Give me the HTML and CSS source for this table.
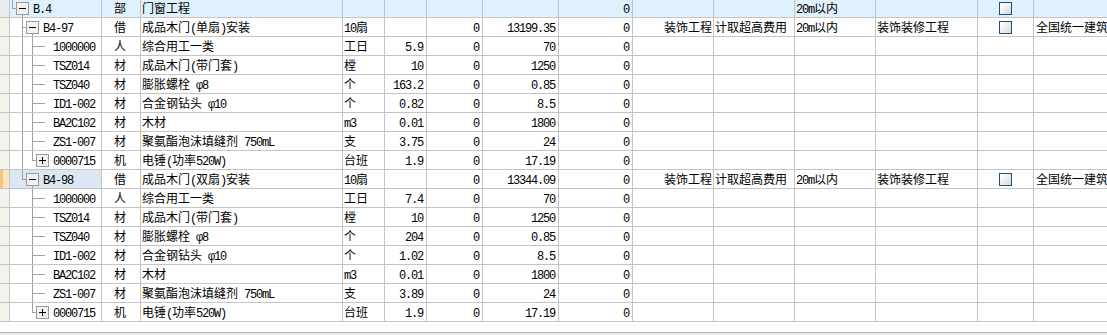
FILE: index.html
```html
<!DOCTYPE html>
<html lang="zh-CN">
<head>
<meta charset="utf-8">
<title>门窗工程</title>
<link rel="stylesheet" href="styles.css">
</head>
<body>
<div class="grid">
  <div class="row hd">
    <div class="c s"></div>
    <div class="c code"><svg class="tr" width="23" height="18"><line x1="2.5" y1="0" x2="2.5" y2="10"/><line x1="2" y1="9.5" x2="6" y2="9.5"/><line x1="12.5" y1="16" x2="12.5" y2="18"/><rect x="6.5" y="3.5" width="12" height="12"/><line class="g" x1="9" y1="9.5" x2="16" y2="9.5"/></svg><span class="m">B.4</span></div>
    <div class="c t">部</div>
    <div class="c n">门窗工程</div>
    <div class="c"></div>
    <div class="c"></div>
    <div class="c"></div>
    <div class="c"></div>
    <div class="c r"><span class="m">0</span></div>
    <div class="c"></div>
    <div class="c"></div>
    <div class="c n"><span class="m">20m</span>以内</div>
    <div class="c"></div>
    <div class="c cbc"><span class="cb"></span></div>
    <div class="c"></div>
  </div>

  <div class="row">
    <div class="c s"></div>
    <div class="c code"><svg class="tr" width="33" height="18"><line x1="12.5" y1="0" x2="12.5" y2="18"/><line x1="12" y1="9.5" x2="16" y2="9.5"/><line x1="22.5" y1="16" x2="22.5" y2="18"/><rect x="16.5" y="3.5" width="12" height="12"/><line class="g" x1="19" y1="9.5" x2="26" y2="9.5"/></svg><span class="m">B4-97</span></div>
    <div class="c t">借</div>
    <div class="c n">成品木门<span class="m">(</span>单扇<span class="m">)</span>安装</div>
    <div class="c n"><span class="m">10</span>扇</div>
    <div class="c"></div>
    <div class="c r"><span class="m">0</span></div>
    <div class="c r"><span class="m">13199.35</span></div>
    <div class="c r"><span class="m">0</span></div>
    <div class="c r2">装饰工程</div>
    <div class="c n">计取超高费用</div>
    <div class="c n"><span class="m">20m</span>以内</div>
    <div class="c n">装饰装修工程</div>
    <div class="c cbc"><span class="cb"></span></div>
    <div class="c n2">全国统一建筑装饰装修工程消耗量定额</div>
  </div>

  <div class="row">
    <div class="c s"></div>
    <div class="c code"><svg class="tr" width="43" height="18"><line x1="12.5" y1="0" x2="12.5" y2="18"/><line x1="22.5" y1="0" x2="22.5" y2="18"/><line x1="22" y1="9.5" x2="35" y2="9.5"/></svg><span class="m">1000000</span></div>
    <div class="c t">人</div>
    <div class="c n">综合用工一类</div>
    <div class="c n">工日</div>
    <div class="c r"><span class="m">5.9</span></div>
    <div class="c r"><span class="m">0</span></div>
    <div class="c r"><span class="m">70</span></div>
    <div class="c r"><span class="m">0</span></div>
    <div class="c"></div><div class="c"></div><div class="c"></div><div class="c"></div><div class="c"></div><div class="c"></div>
  </div>

  <div class="row">
    <div class="c s"></div>
    <div class="c code"><svg class="tr" width="43" height="18"><line x1="12.5" y1="0" x2="12.5" y2="18"/><line x1="22.5" y1="0" x2="22.5" y2="18"/><line x1="22" y1="9.5" x2="35" y2="9.5"/></svg><span class="m">TSZ014</span></div>
    <div class="c t">材</div>
    <div class="c n">成品木门<span class="m">(</span>带门套<span class="m">)</span></div>
    <div class="c n">樘</div>
    <div class="c r"><span class="m">10</span></div>
    <div class="c r"><span class="m">0</span></div>
    <div class="c r"><span class="m">1250</span></div>
    <div class="c r"><span class="m">0</span></div>
    <div class="c"></div><div class="c"></div><div class="c"></div><div class="c"></div><div class="c"></div><div class="c"></div>
  </div>

  <div class="row">
    <div class="c s"></div>
    <div class="c code"><svg class="tr" width="43" height="18"><line x1="12.5" y1="0" x2="12.5" y2="18"/><line x1="22.5" y1="0" x2="22.5" y2="18"/><line x1="22" y1="9.5" x2="35" y2="9.5"/></svg><span class="m">TSZ040</span></div>
    <div class="c t">材</div>
    <div class="c n">膨胀螺栓<span class="m"> φ8</span></div>
    <div class="c n">个</div>
    <div class="c r"><span class="m">163.2</span></div>
    <div class="c r"><span class="m">0</span></div>
    <div class="c r"><span class="m">0.85</span></div>
    <div class="c r"><span class="m">0</span></div>
    <div class="c"></div><div class="c"></div><div class="c"></div><div class="c"></div><div class="c"></div><div class="c"></div>
  </div>

  <div class="row">
    <div class="c s"></div>
    <div class="c code"><svg class="tr" width="43" height="18"><line x1="12.5" y1="0" x2="12.5" y2="18"/><line x1="22.5" y1="0" x2="22.5" y2="18"/><line x1="22" y1="9.5" x2="35" y2="9.5"/></svg><span class="m">ID1-002</span></div>
    <div class="c t">材</div>
    <div class="c n">合金钢钻头<span class="m"> φ10</span></div>
    <div class="c n">个</div>
    <div class="c r"><span class="m">0.82</span></div>
    <div class="c r"><span class="m">0</span></div>
    <div class="c r"><span class="m">8.5</span></div>
    <div class="c r"><span class="m">0</span></div>
    <div class="c"></div><div class="c"></div><div class="c"></div><div class="c"></div><div class="c"></div><div class="c"></div>
  </div>

  <div class="row">
    <div class="c s"></div>
    <div class="c code"><svg class="tr" width="43" height="18"><line x1="12.5" y1="0" x2="12.5" y2="18"/><line x1="22.5" y1="0" x2="22.5" y2="18"/><line x1="22" y1="9.5" x2="35" y2="9.5"/></svg><span class="m">BA2C102</span></div>
    <div class="c t">材</div>
    <div class="c n">木材</div>
    <div class="c n"><span class="m">m3</span></div>
    <div class="c r"><span class="m">0.01</span></div>
    <div class="c r"><span class="m">0</span></div>
    <div class="c r"><span class="m">1800</span></div>
    <div class="c r"><span class="m">0</span></div>
    <div class="c"></div><div class="c"></div><div class="c"></div><div class="c"></div><div class="c"></div><div class="c"></div>
  </div>

  <div class="row">
    <div class="c s"></div>
    <div class="c code"><svg class="tr" width="43" height="18"><line x1="12.5" y1="0" x2="12.5" y2="18"/><line x1="22.5" y1="0" x2="22.5" y2="18"/><line x1="22" y1="9.5" x2="35" y2="9.5"/></svg><span class="m">ZS1-007</span></div>
    <div class="c t">材</div>
    <div class="c n">聚氨酯泡沫填缝剂<span class="m"> 750mL</span></div>
    <div class="c n">支</div>
    <div class="c r"><span class="m">3.75</span></div>
    <div class="c r"><span class="m">0</span></div>
    <div class="c r"><span class="m">24</span></div>
    <div class="c r"><span class="m">0</span></div>
    <div class="c"></div><div class="c"></div><div class="c"></div><div class="c"></div><div class="c"></div><div class="c"></div>
  </div>

  <div class="row">
    <div class="c s"></div>
    <div class="c code"><svg class="tr" width="43" height="18"><line x1="12.5" y1="0" x2="12.5" y2="18"/><line x1="22.5" y1="0" x2="22.5" y2="10"/><line x1="22" y1="9.5" x2="26" y2="9.5"/><rect x="26.5" y="3.5" width="12" height="12"/><line class="g" x1="29" y1="9.5" x2="36" y2="9.5"/><line class="g" x1="32.5" y1="6" x2="32.5" y2="13"/></svg><span class="m">0000715</span></div>
    <div class="c t">机</div>
    <div class="c n">电锤<span class="m">(</span>功率<span class="m">520W)</span></div>
    <div class="c n">台班</div>
    <div class="c r"><span class="m">1.9</span></div>
    <div class="c r"><span class="m">0</span></div>
    <div class="c r"><span class="m">17.19</span></div>
    <div class="c r"><span class="m">0</span></div>
    <div class="c"></div><div class="c"></div><div class="c"></div><div class="c"></div><div class="c"></div><div class="c"></div>
  </div>

  <div class="row sel">
    <div class="c s"></div>
    <div class="c code"><svg class="tr" width="33" height="18"><line x1="12.5" y1="0" x2="12.5" y2="10"/><line x1="12" y1="9.5" x2="16" y2="9.5"/><line x1="22.5" y1="16" x2="22.5" y2="18"/><rect x="16.5" y="3.5" width="12" height="12"/><line class="g" x1="19" y1="9.5" x2="26" y2="9.5"/></svg><span class="m">B4-98</span></div>
    <div class="c t">借</div>
    <div class="c n">成品木门<span class="m">(</span>双扇<span class="m">)</span>安装</div>
    <div class="c n"><span class="m">10</span>扇</div>
    <div class="c"></div>
    <div class="c r"><span class="m">0</span></div>
    <div class="c r"><span class="m">13344.09</span></div>
    <div class="c r"><span class="m">0</span></div>
    <div class="c r2">装饰工程</div>
    <div class="c n">计取超高费用</div>
    <div class="c n"><span class="m">20m</span>以内</div>
    <div class="c n">装饰装修工程</div>
    <div class="c cbc"><span class="cb"></span></div>
    <div class="c n2">全国统一建筑装饰装修工程消耗量定额</div>
  </div>

  <div class="row">
    <div class="c s"></div>
    <div class="c code"><svg class="tr" width="43" height="18"><line x1="22.5" y1="0" x2="22.5" y2="18"/><line x1="22" y1="9.5" x2="35" y2="9.5"/></svg><span class="m">1000000</span></div>
    <div class="c t">人</div>
    <div class="c n">综合用工一类</div>
    <div class="c n">工日</div>
    <div class="c r"><span class="m">7.4</span></div>
    <div class="c r"><span class="m">0</span></div>
    <div class="c r"><span class="m">70</span></div>
    <div class="c r"><span class="m">0</span></div>
    <div class="c"></div><div class="c"></div><div class="c"></div><div class="c"></div><div class="c"></div><div class="c"></div>
  </div>

  <div class="row">
    <div class="c s"></div>
    <div class="c code"><svg class="tr" width="43" height="18"><line x1="22.5" y1="0" x2="22.5" y2="18"/><line x1="22" y1="9.5" x2="35" y2="9.5"/></svg><span class="m">TSZ014</span></div>
    <div class="c t">材</div>
    <div class="c n">成品木门<span class="m">(</span>带门套<span class="m">)</span></div>
    <div class="c n">樘</div>
    <div class="c r"><span class="m">10</span></div>
    <div class="c r"><span class="m">0</span></div>
    <div class="c r"><span class="m">1250</span></div>
    <div class="c r"><span class="m">0</span></div>
    <div class="c"></div><div class="c"></div><div class="c"></div><div class="c"></div><div class="c"></div><div class="c"></div>
  </div>

  <div class="row">
    <div class="c s"></div>
    <div class="c code"><svg class="tr" width="43" height="18"><line x1="22.5" y1="0" x2="22.5" y2="18"/><line x1="22" y1="9.5" x2="35" y2="9.5"/></svg><span class="m">TSZ040</span></div>
    <div class="c t">材</div>
    <div class="c n">膨胀螺栓<span class="m"> φ8</span></div>
    <div class="c n">个</div>
    <div class="c r"><span class="m">204</span></div>
    <div class="c r"><span class="m">0</span></div>
    <div class="c r"><span class="m">0.85</span></div>
    <div class="c r"><span class="m">0</span></div>
    <div class="c"></div><div class="c"></div><div class="c"></div><div class="c"></div><div class="c"></div><div class="c"></div>
  </div>

  <div class="row">
    <div class="c s"></div>
    <div class="c code"><svg class="tr" width="43" height="18"><line x1="22.5" y1="0" x2="22.5" y2="18"/><line x1="22" y1="9.5" x2="35" y2="9.5"/></svg><span class="m">ID1-002</span></div>
    <div class="c t">材</div>
    <div class="c n">合金钢钻头<span class="m"> φ10</span></div>
    <div class="c n">个</div>
    <div class="c r"><span class="m">1.02</span></div>
    <div class="c r"><span class="m">0</span></div>
    <div class="c r"><span class="m">8.5</span></div>
    <div class="c r"><span class="m">0</span></div>
    <div class="c"></div><div class="c"></div><div class="c"></div><div class="c"></div><div class="c"></div><div class="c"></div>
  </div>

  <div class="row">
    <div class="c s"></div>
    <div class="c code"><svg class="tr" width="43" height="18"><line x1="22.5" y1="0" x2="22.5" y2="18"/><line x1="22" y1="9.5" x2="35" y2="9.5"/></svg><span class="m">BA2C102</span></div>
    <div class="c t">材</div>
    <div class="c n">木材</div>
    <div class="c n"><span class="m">m3</span></div>
    <div class="c r"><span class="m">0.01</span></div>
    <div class="c r"><span class="m">0</span></div>
    <div class="c r"><span class="m">1800</span></div>
    <div class="c r"><span class="m">0</span></div>
    <div class="c"></div><div class="c"></div><div class="c"></div><div class="c"></div><div class="c"></div><div class="c"></div>
  </div>

  <div class="row">
    <div class="c s"></div>
    <div class="c code"><svg class="tr" width="43" height="18"><line x1="22.5" y1="0" x2="22.5" y2="18"/><line x1="22" y1="9.5" x2="35" y2="9.5"/></svg><span class="m">ZS1-007</span></div>
    <div class="c t">材</div>
    <div class="c n">聚氨酯泡沫填缝剂<span class="m"> 750mL</span></div>
    <div class="c n">支</div>
    <div class="c r"><span class="m">3.89</span></div>
    <div class="c r"><span class="m">0</span></div>
    <div class="c r"><span class="m">24</span></div>
    <div class="c r"><span class="m">0</span></div>
    <div class="c"></div><div class="c"></div><div class="c"></div><div class="c"></div><div class="c"></div><div class="c"></div>
  </div>

  <div class="row">
    <div class="c s"></div>
    <div class="c code"><svg class="tr" width="43" height="18"><line x1="22.5" y1="0" x2="22.5" y2="10"/><line x1="22" y1="9.5" x2="26" y2="9.5"/><rect x="26.5" y="3.5" width="12" height="12"/><line class="g" x1="29" y1="9.5" x2="36" y2="9.5"/><line class="g" x1="32.5" y1="6" x2="32.5" y2="13"/></svg><span class="m">0000715</span></div>
    <div class="c t">机</div>
    <div class="c n">电锤<span class="m">(</span>功率<span class="m">520W)</span></div>
    <div class="c n">台班</div>
    <div class="c r"><span class="m">1.9</span></div>
    <div class="c r"><span class="m">0</span></div>
    <div class="c r"><span class="m">17.19</span></div>
    <div class="c r"><span class="m">0</span></div>
    <div class="c"></div><div class="c"></div><div class="c"></div><div class="c"></div><div class="c"></div><div class="c"></div>
  </div>
</div>
<div class="spacer"></div>
<div class="status"></div>
</body>
</html>
```

FILE: styles.css
```css
* { box-sizing: border-box; }

html, body {
  margin: 0;
  padding: 0;
  background: #ffffff;
}

body {
  width: 1107px;
  height: 335px;
  overflow: hidden;
  display: flex;
  flex-direction: column;
  font-family: "Noto Sans CJK SC", "Noto Sans", sans-serif;
  font-size: 12px;
  color: #000000;
}

.grid {
  margin-top: -1px;
  width: 1154px;
  flex: none;
}

.row {
  display: grid;
  grid-template-columns: 10px 92px 39px 202px 42px 42px 56px 76px 74px 81px 81px 81px 102px 56px 120px;
  height: 19px;
}

.c {
  height: 19px;
  border-right: 1px solid #c4c4c4;
  border-bottom: 1px solid #c4c4c4;
  line-height: 18px;
  white-space: nowrap;
  overflow: hidden;
  padding: 0 2px 0 1px;
}

.s {
  background: #f3f2ed;
  padding: 0;
}

.hd .c { background: #dff1fc; }
.hd .s { background: #e6eef2; }

.sel .s { background: linear-gradient(to right, #f6c57c 0, #f6c57c 3px, #fbe5c2 3px); }
.sel .code { background: #dde6f3; }

.code { padding: 0; }

.tr {
  display: inline-block;
  vertical-align: top;
  shape-rendering: crispEdges;
}
.tr line { stroke: #a0a0a0; stroke-width: 1; }
.tr rect { fill: #f2f2f2; stroke: #9a9a9a; stroke-width: 1; }
.tr line.g { stroke: #000000; }

.t {
  text-align: center;
  padding: 0 2px 0 0;
}

.n { padding-left: 1px; }
.n2 { padding-left: 2px; }

.r {
  text-align: right;
  padding-right: 3px;
}

.r2 {
  text-align: right;
  padding-right: 1px;
}

.cbc {
  display: flex;
  justify-content: center;
  align-items: flex-start;
  padding: 3px 0 0 0;
}

.cb {
  width: 13px;
  height: 13px;
  border: 1px solid #1d4f7b;
  background: linear-gradient(135deg, #ffffff 15%, #d6d6d6 100%);
}

.m {
  font-family: "Liberation Mono", monospace;
  font-size: 12px;
  letter-spacing: -1.2px;
  color: #000000;
}

.spacer {
  height: 10px;
  flex: none;
}

.status {
  flex: 1;
  border-top: 1px solid #a2aebc;
  background: #eef1e4;
}
```
